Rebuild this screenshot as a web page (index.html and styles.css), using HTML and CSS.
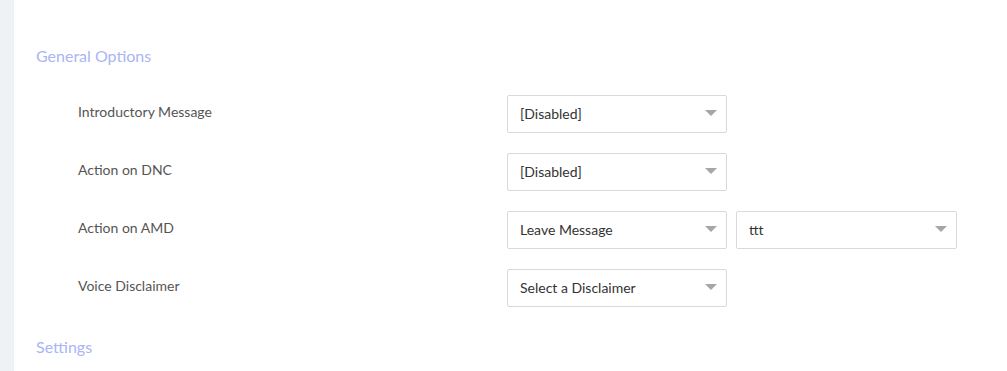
FILE: index.html
```html
<!DOCTYPE html>
<html>
<head>
<meta charset="utf-8">
<link rel="stylesheet" href="styles.css">
</head>
<body>
<div class="page">
  <aside class="sidebar"></aside>
  <main class="main">
    <h2 class="section-title">General Options</h2>
    <div class="options">
      <div class="row">
        <div class="label">Introductory Message</div>
        <div class="controls">
          <div class="select"><span>[Disabled]</span><i class="caret"></i></div>
        </div>
      </div>
      <div class="row">
        <div class="label">Action on DNC</div>
        <div class="controls">
          <div class="select"><span>[Disabled]</span><i class="caret"></i></div>
        </div>
      </div>
      <div class="row">
        <div class="label">Action on AMD</div>
        <div class="controls">
          <div class="select"><span>Leave Message</span><i class="caret"></i></div>
          <div class="select"><span>ttt</span><i class="caret"></i></div>
        </div>
      </div>
      <div class="row">
        <div class="label">Voice Disclaimer</div>
        <div class="controls">
          <div class="select"><span>Select a Disclaimer</span><i class="caret"></i></div>
        </div>
      </div>
    </div>
    <h2 class="section-title settings">Settings</h2>
  </main>
</div>
</body>
</html>
```

FILE: styles.css
```css
html, body {
  margin: 0;
  padding: 0;
  background: #ffffff;
  font-family: "Lato", "Noto Sans", sans-serif;
}
.page {
  display: flex;
  min-height: 371px;
}
.sidebar {
  width: 14px;
  flex: none;
  background: #eef2f5;
}
.main {
  flex: 1;
  padding: 46px 0 0 22px;
}
.section-title {
  margin: 0;
  font-size: 16px;
  line-height: 20px;
  font-weight: 400;
  color: #a9b5f4;
}
.options {
  display: flex;
  flex-direction: column;
  gap: 20px;
  margin-top: 29px;
  margin-left: 42px;
}
.settings {
  margin-top: 30px;
}
.row {
  display: flex;
  align-items: center;
}
.label {
  width: 429px;
  flex: none;
  font-size: 14px;
  line-height: 18px;
  padding-bottom: 5px;
  color: #555555;
}
.controls {
  display: flex;
  gap: 9px;
}
.select {
  box-sizing: border-box;
  width: 220px;
  height: 38px;
  border: 1px solid #d9d9d9;
  border-radius: 2px;
  display: flex;
  align-items: center;
  justify-content: space-between;
  padding: 0 9px 2px 12px;
  font-size: 14px;
  color: #333333;
}
.controls .select + .select {
  width: 221px;
}
.caret {
  width: 0;
  height: 0;
  border-left: 6px solid transparent;
  border-right: 6px solid transparent;
  border-top: 6px solid #a6a6a6;
}
```
